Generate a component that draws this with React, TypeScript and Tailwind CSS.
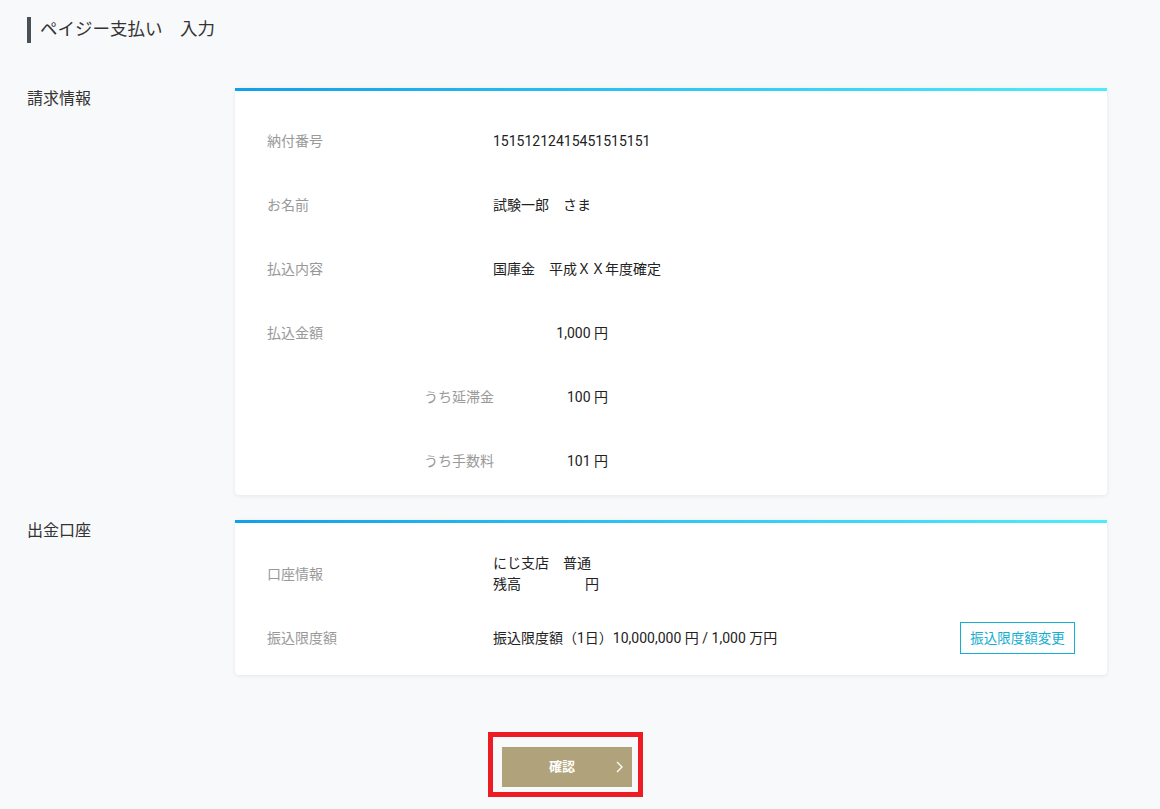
export default function App() {
    return (
        <div className="min-h-[809px] bg-[#f8f9fb] pl-[27px] pr-[53px] pt-[17px] pb-[12px] font-['Roboto','Noto_Sans_CJK_JP',sans-serif] text-[#222]">
            {/* Page title */}
            <div className="flex items-center h-[26px] border-l-4 border-[#4a5058] pl-[9px]">
                <h1 className="text-[17.5px] leading-none text-[#333]">ペイジー支払い　入力</h1>
            </div>

            {/* 請求情報 */}
            <section className="flex mt-[45px]">
                <h2 className="w-[208px] shrink-0 text-[16px] leading-[22px] text-[#333]">請求情報</h2>
                <div className="flex-1 bg-white rounded-b-[4px] shadow-[0_1px_4px_rgba(0,0,0,0.08)]">
                    <div className="h-[3px] bg-gradient-to-r from-[#0fa0ea] to-[#4cedfb]" />
                    <div className="px-[32px] pt-[18px] pb-[2px] text-[14px]">
                        <Row label="納付番号">15151212415451515151</Row>
                        <Row label="お名前">試験一郎　さま</Row>
                        <Row label="払込内容">国庫金　平成ＸＸ年度確定</Row>
                        <Row label="払込金額">
                            <Amount value="1,000" />
                        </Row>
                        <Row label="うち延滞金" sub>
                            <Amount value="100" />
                        </Row>
                        <Row label="うち手数料" sub>
                            <Amount value="101" />
                        </Row>
                    </div>
                </div>
            </section>

            {/* 出金口座 */}
            <section className="flex mt-[25px]">
                <h2 className="w-[208px] shrink-0 text-[16px] leading-[22px] text-[#333]">出金口座</h2>
                <div className="flex-1 bg-white rounded-b-[4px] shadow-[0_1px_4px_rgba(0,0,0,0.08)]">
                    <div className="h-[3px] bg-gradient-to-r from-[#0fa0ea] to-[#4cedfb]" />
                    <div className="px-[32px] pt-[19px] pb-[5px] text-[14px]">
                        <Row label="口座情報">
                            <div className="leading-[21px]">
                                <div>にじ支店　普通</div>
                                <div className="flex">
                                    <span>残高</span>
                                    <span className="w-[64px]" />
                                    <span>円</span>
                                </div>
                            </div>
                        </Row>
                        <Row label="振込限度額">
                            <div className="flex flex-1 items-center justify-between">
                                <span>振込限度額（1日）10,000,000 円 / 1,000 万円</span>
                                <button className="w-[115px] h-[32px] border border-[#14aed0] text-[#14aed0] text-[13.5px] bg-white">
                                    振込限度額変更
                                </button>
                            </div>
                        </Row>
                    </div>
                </div>
            </section>

            {/* Confirm button */}
            <div className="mt-[57px] pl-[461px]">
                <div className="inline-block border-[5px] border-[#ed1c24] pl-[9px] pr-[6px] pt-[10px] pb-[5px]">
                    <button className="relative flex items-center justify-center w-[130px] h-[40px] bg-[#b0a27a] text-white text-[13px] font-bold">
                        <span className="-ml-[10px]">確認</span>
                        <svg className="absolute right-[8px] top-1/2 -translate-y-1/2 w-[10px] h-[12px]" viewBox="0 0 10 12" fill="none" stroke="currentColor" strokeWidth={1.3}>
                            <path d="M3 1l5 5-5 5" />
                        </svg>
                    </button>
                </div>
            </div>
        </div>
    );
}

function Row({ label, sub, children }: { label: string; sub?: boolean; children: React.ReactNode }) {
    return (
        <div className="flex items-center h-[64px]">
            <div className={`w-[226px] shrink-0 whitespace-nowrap text-[#999] ${sub ? 'pl-[157px]' : ''}`}>{label}</div>
            {children}
        </div>
    );
}

function Amount({ value }: { value: string }) {
    return <div className="w-[115px] text-right">{value} 円</div>;
}
